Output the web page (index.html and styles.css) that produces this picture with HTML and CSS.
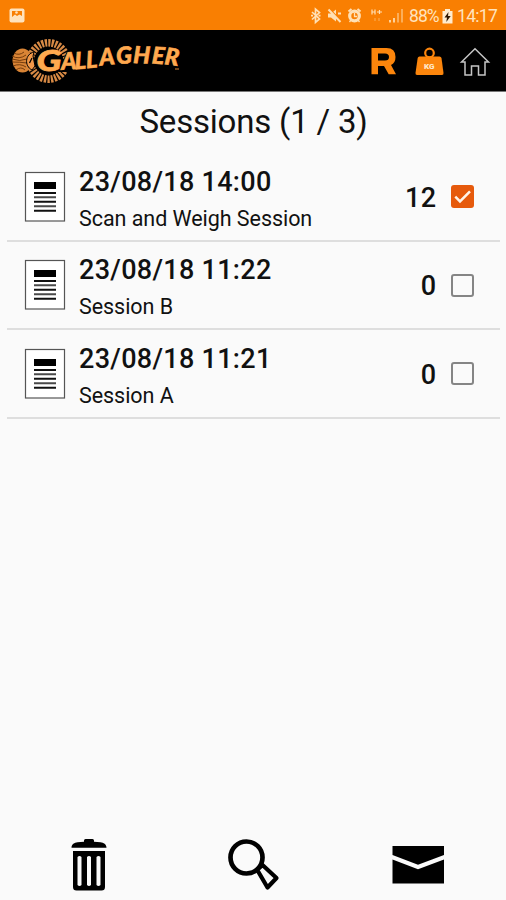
FILE: index.html
```html
<!DOCTYPE html>
<html lang="en">
<head>
<meta charset="utf-8">
<title>Sessions</title>
<link rel="stylesheet" href="styles.css">
</head>
<body>
<svg width="0" height="0" class="defs">
  <symbol id="doc" viewBox="0 0 42 52">
    <rect x="1.500" y="1.500" width="39" height="48.500" fill="#fff" stroke="#555" stroke-width="1.200"/>
    <rect x="10" y="11" width="22" height="7"/>
    <path d="M10 22h22M10 30.800h22M10 39.700h22" stroke="#111" stroke-width="2"/>
    <path d="M10 26.300h22M10 35.200h22" stroke="#4a4a4a" stroke-width="2"/>
  </symbol>
</svg>
<div class="status">
  <svg class="picture" width="16" height="15" viewBox="0 0 16 15"><rect x="0.500" y="0.500" width="15" height="14" rx="2" fill="#ffe3bd"/><path d="M3 3v6l3-2.500 2 1.500 2.500-1.500L13 8V3z" fill="#f97f02"/><circle cx="7.500" cy="4.500" r="1.300" fill="#ffe3bd"/></svg>
  <div class="status-right">
    <svg width="96" height="18" viewBox="309 7 96 18" fill="none" stroke="#ffe0b5">
      <path d="M312 12l7.500 7-4 3.500V9l4 3.500-7.500 7M311 15.700h2M318.500 15.700h2" stroke-width="1.700"/>
      <path d="M328 13.500h3l5-4v12l-5-4h-3z" fill="#ffe0b5" stroke="none"/>
      <path d="M329.500 9l12 12" stroke="#f97f02" stroke-width="1.500"/><path d="M328.500 9.500l12 12.500M338 13.500h3" stroke-width="2"/>
      <circle cx="354.500" cy="16" r="4.800" stroke-width="3.200"/><path d="M348.500 11.500l3-2.500M360.500 11.500l-3-2.500" stroke-width="2"/><path d="M354.500 13v3.500h2.500M351 20l-1.500 2M358 20l1.500 2" stroke-width="1.300"/>
      <path d="M372 9.500v5M375 9.500v5M372 12h3M377 12h5M379.500 10v4" stroke-width="1.200"/><path d="M375 18v3M379 18v3" stroke-width="1" opacity=".5"/>
      <path d="M390 20v2.500M394 18v4.500" stroke-width="1.700"/><path d="M398 13v9.500M402 9v13.500" stroke-width="1.500" opacity=".65"/>
    </svg>
    <span class="battery-text">88%</span>
    <svg class="battery" width="11" height="15" viewBox="0 0 11 15"><path d="M3 0h5v2h2.500v12.500H.500V2H3z" fill="#ffebce"/><path d="M6.500 3L2.500 8.500H5L4.300 13 8.700 7H6z" fill="#2d1600"/></svg>
    <span class="clock">14:17</span>
  </div>
</div>
<header class="header">
  <svg class="logo" width="172" height="52" viewBox="10 36 172 52">
    <ellipse cx="22.500" cy="61.500" rx="10" ry="12" fill="#d98435"/>
    <path d="M14 54q5 3 10-1M12 57q7 4 14-1M12 60q8 3 15 0M12 63q8 0 15 1M13 67q7-3 13 1M16 71q5-4 9 0" fill="none" stroke="#6b3408" stroke-width=".9"/>
    <circle cx="48.500" cy="62" r="18.200" fill="none" stroke="#d88a45" stroke-width="7.500" stroke-dasharray="2.200 1.200"/>
    <path d="M34 53c-9 2-10 14-2 18l3-4-2-10z" fill="#f2994a" stroke="#000" stroke-width="1"/>
    <path d="M32 59l-2.500 5" stroke="#000" stroke-width="1.200"/>
    <ellipse cx="49" cy="62" rx="14.500" ry="13" fill="#000"/>
    <path d="M58 73l9-21h8v21z"/>
    <text class="logo-name" x="61.500 75 86.500 100 116.500 133 151.500 164" y="70.800 70.300 69.300 66.800 65 64 64.500 65.300" rotate="-3 -3 -4 -6 -3 2 4 7">ALLAGHER</text>
    <text class="logo-g" x="36.500" y="72" textLength="25" lengthAdjust="spacingAndGlyphs">G</text>
    <path d="M175 70h4" stroke="#e68b35" stroke-width="1"/>
  </svg>
  <svg class="actions" width="122" height="36" viewBox="369 43 122 36">
    <path fill="#fb850c" fill-rule="evenodd" d="M371.500 48h15q9 0 9 9 0 6-4.500 8l5 9.300h-7.300l-4.700-8.300H378v8.300h-6.500zM378 53.500v7h7q4 0 4-3.500t-4-3.500z"/>
    <circle cx="429.500" cy="53" r="4.300" fill="none" stroke="#fb850c" stroke-width="2.200"/>
    <path d="M419.500 56.500h20q1.500 0 2 1.500l2 15q.2 2-1.500 2h-25q-1.700 0-1.500-2l2.200-15q.3-1.500 1.800-1.500z" fill="#fb850c"/>
    <text class="kg" x="424" y="69.300">KG</text>
    <path d="M461.500 62l13.500-13.300L488.500 62h-3.500v13h-6.500v-9h-7v9H465V62z" fill="none" stroke="#c5c5c5" stroke-width="1.500"/>
  </svg>
</header>
<main>
  <h1>Sessions (1 / 3)</h1>
  <ul class="sessions">
    <li>
      <svg class="doc" width="42" height="52"><use href="#doc"/></svg>
      <div class="info"><div class="date">23/08/18 14:00</div><div class="name">Scan and Weigh Session</div></div>
      <span class="count">12</span>
      <span class="box checked"><svg width="23" height="23" viewBox="0 0 23 23"><path d="M4.300 11.700l4.700 4.700L19 6.300" fill="none" stroke="#fff4e8" stroke-width="2.500"/></svg></span>
    </li>
    <li>
      <svg class="doc" width="42" height="52"><use href="#doc"/></svg>
      <div class="info"><div class="date">23/08/18 11:22</div><div class="name">Session B</div></div>
      <span class="count">0</span>
      <span class="box"></span>
    </li>
    <li>
      <svg class="doc" width="42" height="52"><use href="#doc"/></svg>
      <div class="info"><div class="date">23/08/18 11:21</div><div class="name">Session A</div></div>
      <span class="count">0</span>
      <span class="box"></span>
    </li>
  </ul>
</main>
<footer class="toolbar">
  <svg width="36" height="54" viewBox="71 838 36 54">
    <path d="M71.500 847.700c0-3.500 3-5.200 6-5.500l6.500-.4v-1.300q0-1.500 1.500-1.500h7q1.500 0 1.500 1.500v1.300l6.500.4c3 .3 6 2 6 5.500z"/>
    <path fill-rule="evenodd" d="M73 851h32v36q0 3.500-3.500 3.500h-25q-3.500 0-3.500-3.500zM77.500 857v28q2 2 4 0v-28q-2-2-4 0zM87 857v28q2 2 4 0v-28q-2-2-4 0zM96.500 857v28q2 2 4 0v-28q-2-2-4 0z"/>
  </svg>
  <svg class="search" width="54" height="54" viewBox="227 838 54 54" fill="none" stroke="#000">
    <circle cx="246.500" cy="857.500" r="16" stroke-width="4.700"/>
    <path d="M257 869.500l5.500-4.500 14 13-9 9.500z" stroke-width="4.200" stroke-linejoin="round"/>
  </svg>
  <svg width="54" height="54" viewBox="391 838 54 54">
    <path d="M392.500 846h51.500v9l-26 9.800-25.500-9.800zM392.500 859.500l25.500 9.700 26-9.700v24h-51.500z"/>
  </svg>
</footer>
</body>
</html>
```

FILE: styles.css
```css
* { box-sizing: border-box; }
body {
  margin: 0;
  height: 900px;
  display: flex;
  flex-direction: column;
  background: #fafafa;
  color: #111;
  font-family: Roboto, "Liberation Sans", sans-serif;
  overflow: hidden;
}
svg { display: block; flex: none; }
.defs { position: absolute; }
.status {
  height: 30px;
  flex: none;
  display: flex;
  align-items: center;
  justify-content: space-between;
  padding: 0 9px;
  background: #f97f02;
  color: #ffe3bd;
  font-size: 17.500px;
}
.status-right { display: flex; align-items: center; height: 30px; padding-top: 2px; }
.battery-text { width: 29px; margin-left: 4px; letter-spacing: -.9px; white-space: nowrap; }
.battery { margin-left: 4px; }
.clock { width: 40px; margin-left: 4px; letter-spacing: -.7px; white-space: nowrap; }
.header {
  height: 62px;
  flex: none;
  display: flex;
  align-items: center;
  justify-content: space-between;
  padding: 0 15px 0 10px;
  background: #000;
  border-bottom: 1px solid #777;
}
.logo-g, .logo-name {
  font-family: Lato, sans-serif;
  font-weight: 900;
  font-style: italic;
  fill: #ffa94f;
}
.logo-g { font-size: 29px; stroke: #ffa94f; stroke-width: .8px; }
.logo-name { font-size: 23.500px; stroke: #ffa94f; stroke-width: .6px; }
.kg { font-size: 8px; font-weight: 900; fill: #ffe8cb; }
main { flex: 1; padding: 0 6px 0 7px; }
h1 {
  margin: 0;
  height: 61px;
  line-height: 59px;
  text-align: center;
  font-size: 33px;
  font-weight: 400;
  letter-spacing: -.2px;
}
.sessions { list-style: none; margin: 0; padding: 0; }
li {
  height: 88.500px;
  display: flex;
  align-items: center;
  padding: 1px 26.500px 0 17px;
  border-bottom: 2px solid #dedede;
}
.info { flex: 1; margin-left: 13px; padding-top: 5px; }
.date { font-size: 27px; line-height: 34px; font-weight: 500; letter-spacing: .3px; }
.name { font-size: 21.500px; line-height: 30px; margin-top: 5px; letter-spacing: -.05px; }
.count { font-size: 27px; font-weight: 500; letter-spacing: .4px; margin: 2px 14px 0 0; }
.box { width: 23px; height: 23px; border: 2px solid #858585; border-radius: 3px; }
.checked { border: 0; background: #e65a0c; }
.toolbar {
  height: 64px;
  flex: none;
  display: flex;
  justify-content: space-between;
  padding: 2px 61px 0 71px;
}
.search { margin-left: 10px; }
```
